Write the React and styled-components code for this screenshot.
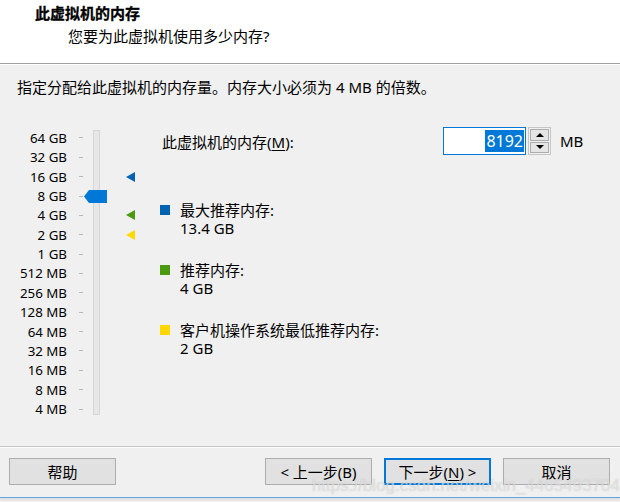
import styled, { createGlobalStyle } from "styled-components";

const GlobalStyle = createGlobalStyle`
    html, body {
        margin: 0;
        padding: 0;
        background: #f0f0f0;
    }
    body {
        font-family: "Noto Sans", "Noto Sans CJK SC", sans-serif;
        font-size: 15px;
        color: #000;
    }
`;

const FONT = `"Noto Sans", "Noto Sans CJK SC", sans-serif`;

const LABELS = [
    "64 GB", "32 GB", "16 GB", "8 GB", "4 GB", "2 GB", "1 GB",
    "512 MB", "256 MB", "128 MB", "64 MB", "32 MB", "16 MB", "8 MB", "4 MB",
];

const MARKERS = { 2: "#0063b1", 4: "#4a990f", 5: "#ffd800" };

const ROW_H = 19.36;

const Window = styled.div`
    position: relative;
    width: 620px;
    height: 502px;
    display: flex;
    flex-direction: column;
    background: #f0f0f0;
    overflow: hidden;
    font-family: ${FONT};
`;

const Header = styled.header`
    height: 64px;
    box-sizing: border-box;
    background: #fff;
    border-bottom: 1px solid #a0a0a0;
    box-shadow: 0 1px 0 #ffffff;
    display: flex;
    flex-direction: column;
    padding-top: 3px;
`;

const Title = styled.div`
    font-weight: 700;
    font-size: 15px;
    line-height: 20px;
    padding-left: 35px;
    -webkit-text-stroke: 0.3px #000;
`;

const Subtitle = styled.div`
    font-size: 15px;
    line-height: 20px;
    padding-left: 68px;
    margin-top: 3px;
`;

const Description = styled.p`
    margin: 0;
    padding: 13px 0 0 17px;
    font-size: 15px;
    line-height: 20px;
`;

const Main = styled.section`
    flex: 1;
    display: flex;
    margin-top: 28px;
`;

const Slider = styled.div`
    width: 160px;
    display: flex;
    align-items: flex-start;
`;

const LabelCol = styled.div`
    display: flex;
    flex-direction: column;
    padding-top: 3.3px;
`;

const Row = styled.div`
    height: ${ROW_H}px;
    display: flex;
    align-items: center;
`;

const Label = styled.span`
    width: 67px;
    text-align: right;
    font-size: 13.3px;
    line-height: 16px;
`;

const Tick = styled.span`
    width: 4px;
    height: 1px;
    background: #b8b8b8;
    margin-left: 12px;
    margin-right: 10px;
`;

const Track = styled.div`
    position: relative;
    width: 5px;
    height: 283px;
    margin-top: 5px;
    background: #e7e7e7;
    border: 1px solid #d6d6d6;
`;

const Thumb = styled.div`
    position: absolute;
    left: -10px;
    top: ${(p) => p.$top}px;
    width: 23px;
    height: 13px;
    background: #0078d7;
    clip-path: polygon(0 50%, 5px 0, 100% 0, 100% 100%, 5px 100%);
`;

const MarkerCol = styled.div`
    display: flex;
    flex-direction: column;
    padding-top: 3.3px;
    margin-left: 26px;
`;

const Triangle = styled.span`
    width: 0;
    height: 0;
    border-top: 5px solid transparent;
    border-bottom: 5px solid transparent;
    border-right: 9px solid ${(p) => p.$color};
`;

const Content = styled.div`
    flex: 1;
    display: flex;
    flex-direction: column;
`;

const MemoryRow = styled.div`
    display: flex;
    align-items: center;
    margin-top: 2px;
`;

const MemoryLabel = styled.label`
    width: 281px;
    padding-left: 2px;
    font-size: 15px;
    line-height: 20px;
    margin-top: 1px;
`;

const Key = styled.u`
    text-decoration: underline;
    text-underline-offset: 2px;
`;

const Input = styled.div`
    width: 80px;
    height: 26px;
    background: #fff;
    border: 1px solid #0078d7;
    display: flex;
    align-items: center;
    justify-content: flex-end;
    padding-right: 1px;
`;

const Selected = styled.span`
    background: #0078d7;
    color: #fff;
    font-size: 16px;
    line-height: 22px;
    padding: 0 1px;
`;

const Spinner = styled.div`
    display: flex;
    flex-direction: column;
    margin-left: 2px;
    width: 23px;
    height: 28px;
    background: #f0f0f0;
    border: 1px solid #c6c6c6;
    box-sizing: border-box;
    padding: 1px;
    gap: 1px;
`;

const SpinButton = styled.div`
    flex: 1;
    background: #e5e5e5;
    border: 1px solid #adadad;
    display: flex;
    align-items: center;
    justify-content: center;
`;

const Arrow = styled.span`
    width: 0;
    height: 0;
    border-left: 4px solid transparent;
    border-right: 4px solid transparent;
    ${(p) => (p.$up ? "border-bottom: 4px solid #000;" : "border-top: 4px solid #000;")}
`;

const Unit = styled.span`
    margin-left: 9px;
    font-size: 15px;
`;

const Legend = styled.div`
    display: flex;
    flex-direction: column;
    gap: 24px;
    margin-top: 46px;
`;

const LegendItem = styled.div`
    display: flex;
    align-items: flex-start;
`;

const Swatch = styled.span`
    width: 10px;
    height: 10px;
    margin-top: 4px;
    background: ${(p) => p.$color};
    flex-shrink: 0;
`;

const LegendText = styled.div`
    margin-left: 10px;
    font-size: 15px;
    line-height: 18px;
`;

const Footer = styled.footer`
    height: 52px;
    box-sizing: border-box;
    border-top: 1px solid #c8c8c8;
    box-shadow: inset 0 1px 0 #fafafa, 0 2px 2px rgba(0, 0, 0, 0.08);
    display: flex;
    align-items: flex-start;
    padding: 11px 10px 0 9px;
    gap: 12px;
    border-bottom: 1px solid #5fa6e3;
    margin-bottom: 4px;
`;

const Button = styled.button`
    width: 107px;
    height: 27px;
    box-sizing: border-box;
    background: #e1e1e1;
    border: ${(p) => (p.$focused ? "2px solid #0078d7" : "1px solid #adadad")};
    font-family: ${FONT};
    font-size: 15px;
    line-height: 20px;
    color: #000;
    padding: 0;
    ${(p) => p.$push && "margin-right: auto;"}
`;

const Watermark = styled.div`
    position: absolute;
    right: 0;
    bottom: 6px;
    font-family: "Liberation Sans", sans-serif;
    font-size: 17px;
    color: rgba(255, 255, 255, 0.5);
    text-shadow: 0 0 1px rgba(140, 140, 140, 0.5);
    white-space: nowrap;
    pointer-events: none;
`;

export default function App() {
    return (
        <>
            <GlobalStyle />
            <Window>
                <Header>
                    <Title>此虚拟机的内存</Title>
                    <Subtitle>您要为此虚拟机使用多少内存?</Subtitle>
                </Header>
                <Description>指定分配给此虚拟机的内存量。内存大小必须为 4 MB 的倍数。</Description>
                <Main>
                    <Slider>
                        <LabelCol>
                            {LABELS.map((l) => (
                                <Row key={l}>
                                    <Label>{l}</Label>
                                    <Tick />
                                </Row>
                            ))}
                        </LabelCol>
                        <Track>
                            <Thumb $top={59} />
                        </Track>
                        <MarkerCol>
                            {LABELS.map((l, i) => (
                                <Row key={l}>{MARKERS[i] && <Triangle $color={MARKERS[i]} />}</Row>
                            ))}
                        </MarkerCol>
                    </Slider>
                    <Content>
                        <MemoryRow>
                            <MemoryLabel>
                                此虚拟机的内存(<Key>M</Key>):
                            </MemoryLabel>
                            <Input>
                                <Selected>8192</Selected>
                            </Input>
                            <Spinner>
                                <SpinButton>
                                    <Arrow $up />
                                </SpinButton>
                                <SpinButton>
                                    <Arrow />
                                </SpinButton>
                            </Spinner>
                            <Unit>MB</Unit>
                        </MemoryRow>
                        <Legend>
                            <LegendItem>
                                <Swatch $color="#0063b1" />
                                <LegendText>
                                    最大推荐内存:
                                    <br />
                                    13.4 GB
                                </LegendText>
                            </LegendItem>
                            <LegendItem>
                                <Swatch $color="#4a990f" />
                                <LegendText>
                                    推荐内存:
                                    <br />4 GB
                                </LegendText>
                            </LegendItem>
                            <LegendItem>
                                <Swatch $color="#ffd800" />
                                <LegendText>
                                    客户机操作系统最低推荐内存:
                                    <br />2 GB
                                </LegendText>
                            </LegendItem>
                        </Legend>
                    </Content>
                </Main>
                <Footer>
                    <Button $push>帮助</Button>
                    <Button>&lt; 上一步(B)</Button>
                    <Button $focused>
                        下一步(<Key>N</Key>) &gt;
                    </Button>
                    <Button>取消</Button>
                </Footer>
                <Watermark>https://blog.csdn.net/weixin_4465493704</Watermark>
            </Window>
        </>
    );
}
